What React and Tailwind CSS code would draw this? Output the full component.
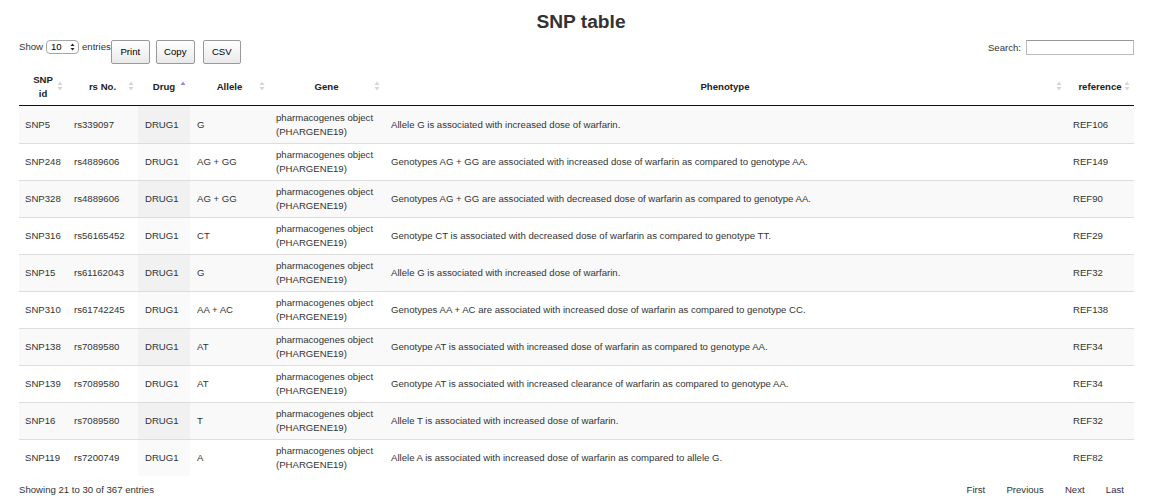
import React from "react";

const cols = [
  { key: "id", label: "SNP id", w: "w-[48px]" },
  { key: "rs", label: "rs No.", w: "w-[71px]" },
  { key: "drug", label: "Drug", w: "w-[52px]", sorted: true },
  { key: "allele", label: "Allele", w: "w-[79px]" },
  { key: "gene", label: "Gene", w: "w-[115px]" },
  { key: "pheno", label: "Phenotype", w: "w-[682px]" },
  { key: "ref", label: "reference", w: "w-[68px]" },
];

const rows = [
  ["SNP5", "rs339097", "G", "Allele G is associated with increased dose of warfarin.", "REF106"],
  ["SNP248", "rs4889606", "AG + GG", "Genotypes AG + GG are associated with increased dose of warfarin as compared to genotype AA.", "REF149"],
  ["SNP328", "rs4889606", "AG + GG", "Genotypes AG + GG are associated with decreased dose of warfarin as compared to genotype AA.", "REF90"],
  ["SNP316", "rs56165452", "CT", "Genotype CT is associated with decreased dose of warfarin as compared to genotype TT.", "REF29"],
  ["SNP15", "rs61162043", "G", "Allele G is associated with increased dose of warfarin.", "REF32"],
  ["SNP310", "rs61742245", "AA + AC", "Genotypes AA + AC are associated with increased dose of warfarin as compared to genotype CC.", "REF138"],
  ["SNP138", "rs7089580", "AT", "Genotype AT is associated with increased dose of warfarin as compared to genotype AA.", "REF34"],
  ["SNP139", "rs7089580", "AT", "Genotype AT is associated with increased clearance of warfarin as compared to genotype AA.", "REF34"],
  ["SNP16", "rs7089580", "T", "Allele T is associated with increased dose of warfarin.", "REF32"],
  ["SNP119", "rs7200749", "A", "Allele A is associated with increased dose of warfarin as compared to allele G.", "REF82"],
];

function SortBoth() {
  return (
    <svg width="6" height="10" viewBox="0 0 6 10" className="block">
      <path d="M3 0.5 L5.5 4 L0.5 4 Z" fill="#d6d6d6" />
      <path d="M3 9.5 L5.5 6 L0.5 6 Z" fill="#d6d6d6" />
    </svg>
  );
}

function SortAsc() {
  return (
    <svg width="6" height="10" viewBox="0 0 6 10" className="block">
      <path d="M3 0.5 L5.5 4 L0.5 4 Z" fill="#8f8fe0" />
    </svg>
  );
}

function Btn({ children, className }) {
  return (
    <div
      className={
        "h-[24px] flex items-center justify-center rounded-[2px] border border-[#999] bg-gradient-to-b from-white to-[#e9e9e9] text-[9.6px] text-black " +
        className
      }
    >
      {children}
    </div>
  );
}

export default function App() {
  return (
    <div className="w-[1152px] h-[504px] bg-white text-[#333] font-['Liberation_Sans',Arial,Helvetica,sans-serif] pl-[19px] pr-[18px] overflow-hidden">
      <div className="pt-[11px] pl-[9px] h-[40px] text-center text-[19.2px] leading-[22px] font-bold text-[#333]">
        SNP table
      </div>

      <div className="flex items-start h-[27px] text-[9.6px] leading-[14px]">
        <div className="flex items-center">
          <span>Show</span>
          <div className="ml-[3px] w-[33px] h-[14px] rounded-[4px] border border-[#a6a6a6] bg-white flex items-center justify-between pl-[4px] pr-[3px] text-black">
            <span className="text-[9.6px] leading-[12px]">10</span>
            <svg width="5" height="8" viewBox="0 0 5 8">
              <path d="M2.5 0.5 L4.5 3 L0.5 3 Z" fill="#222" />
              <path d="M2.5 7.5 L4.5 5 L0.5 5 Z" fill="#222" />
            </svg>
          </div>
          <span className="ml-[3px]">entries</span>
        </div>
        <Btn className="w-[39px]">Print</Btn>
        <Btn className="ml-[6px] w-[39px]">Copy</Btn>
        <Btn className="ml-[8px] w-[38px]">CSV</Btn>
        <div className="ml-auto flex items-center">
          <span>Search:</span>
          <div className="ml-[5px] w-[108px] h-[15px] border border-[#bbb] border-t-[#999] bg-white" />
        </div>
      </div>

      <div className="flex h-[39px] border-b border-[#111] text-[9.6px] leading-[13.7px] font-bold text-[#222]">
        {cols.map((c) => (
          <div
            key={c.key}
            className={c.w + " relative flex items-center justify-center text-center px-[10px] pt-[1px]"}
          >
            <span>{c.label}</span>
            <span className="absolute right-[4px] top-1/2 -translate-y-1/2">
              {c.sorted ? <SortAsc /> : <SortBoth />}
            </span>
          </div>
        ))}
      </div>

      <div className="text-[9.6px] leading-[13.7px] text-[#333]">
        {rows.map((r, i) => {
          const odd = i % 2 === 0;
          return (
            <div
              key={i}
              className={
                "flex h-[37px] box-border " +
                (i > 0 ? "border-t border-[#ddd] " : "") +
                (odd ? "bg-[#f9f9f9]" : "bg-white")
              }
            >
              <div className="w-[48px] pl-[6px] flex items-center">{r[0]}</div>
              <div className="w-[71px] pl-[7px] flex items-center">{r[1]}</div>
              <div className={"w-[52px] pl-[7px] flex items-center " + (odd ? "bg-[#f1f1f1]" : "bg-[#fafafa]")}>
                DRUG1
              </div>
              <div className="w-[79px] pl-[7px] flex items-center">{r[2]}</div>
              <div className="w-[115px] pl-[7px] flex flex-col justify-center">
                <span>pharmacogenes object</span>
                <span>(PHARGENE19)</span>
              </div>
              <div className="w-[682px] pl-[7px] flex items-center">{r[3]}</div>
              <div className="w-[68px] pl-[7px] flex items-center">{r[4]}</div>
            </div>
          );
        })}
      </div>

      <div className="flex items-center h-[27px] text-[9.6px] leading-[14px] text-[#333]">
        <span>Showing 21 to 30 of 367 entries</span>
        <div className="ml-auto flex">
          <span className="px-[9.6px] ml-[2px]">First</span>
          <span className="px-[9.6px] ml-[2px]">Previous</span>
          <span className="px-[9.6px] ml-[2px] text-[#3a2a48]">Next</span>
          <span className="pl-[9.6px] pr-[10px] ml-[2px] text-[#3a2a48]">Last</span>
        </div>
      </div>
    </div>
  );
}
